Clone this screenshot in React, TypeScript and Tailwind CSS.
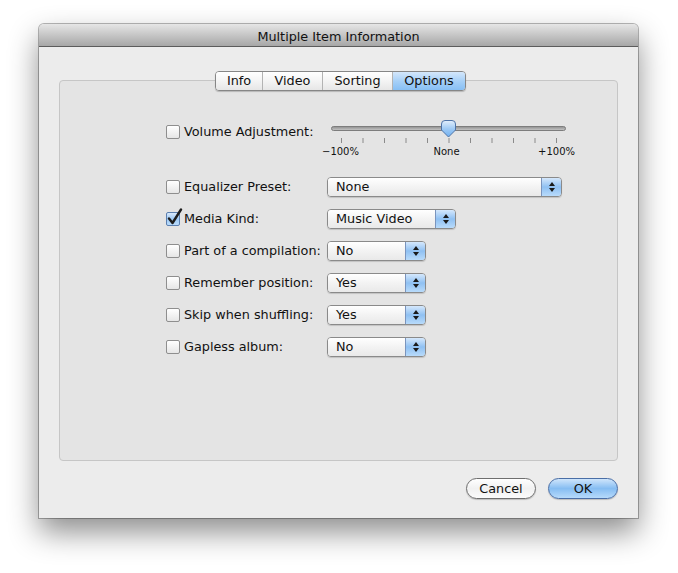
import React from "react";

const TABS = [
  { label: "Info", w: "w-[46px]" },
  { label: "Video", w: "w-[60px]" },
  { label: "Sorting", w: "w-[70px]" },
  { label: "Options", w: "w-[73px]" },
];

function Checkbox({ checked = false }: { checked?: boolean }) {
  return (
    <div className="relative w-[14px] h-[14px] shrink-0">
      <div
        className={
          checked
            ? "w-[14px] h-[14px] rounded-[2px] border border-[#5b7fb0] bg-gradient-to-b from-[#d9eafc] via-[#9ec9f4] to-[#b9dbfb]"
            : "w-[14px] h-[14px] rounded-[2px] border border-[#8e8e8e] bg-gradient-to-b from-[#ffffff] to-[#e6e6e6]"
        }
      />
      {checked && (
        <svg className="absolute -top-[4px] left-[1px]" width="16" height="18" viewBox="0 0 16 18">
          <path d="M2 10.5 L5.5 15 L14 1.5" fill="none" stroke="#1d1d1d" strokeWidth="2.4" strokeLinecap="round" strokeLinejoin="round" />
        </svg>
      )}
    </div>
  );
}

function Popup({ value, width }: { value: string; width: string }) {
  return (
    <div className={`${width} h-[20px] flex rounded-[4px] border border-[#8a8a8a] overflow-hidden shadow-[0_1px_1px_rgba(0,0,0,0.15)]`}>
      <div className="flex-1 flex items-center pl-[8px] text-[12.8px] bg-gradient-to-b from-[#ffffff] via-[#f3f3f3] to-[#e9e9e9]">
        {value}
      </div>
      <div className="w-[20px] flex items-center justify-center border-l border-[#7a94bd] bg-gradient-to-b from-[#d5e8fc] via-[#8fc0f2] to-[#b8dbfb]">
        <svg width="8" height="12" viewBox="0 0 8 12">
          <path d="M4 1 L7 5 L1 5 Z" fill="#1a1a1a" />
          <path d="M4 11 L7 7 L1 7 Z" fill="#1a1a1a" />
        </svg>
      </div>
    </div>
  );
}

function VolumeSlider() {
  const ticks = Array.from({ length: 11 }, (_, i) => 19.5 + i * 21.5);
  return (
    <div className="w-[253px] -ml-[5px]">
      <svg width="253" height="25" viewBox="0 0 253 25">
        <defs>
          <linearGradient id="trk" x1="0" y1="0" x2="0" y2="1">
            <stop offset="0" stopColor="#8d8d8d" />
            <stop offset="1" stopColor="#c9c9c9" />
          </linearGradient>
          <linearGradient id="thumb" x1="0" y1="0" x2="0" y2="1">
            <stop offset="0" stopColor="#e3effc" />
            <stop offset="0.5" stopColor="#9fcaf5" />
            <stop offset="1" stopColor="#6fb0f0" />
          </linearGradient>
        </defs>
        <rect x="9.5" y="6.5" width="234" height="4" rx="2" fill="url(#trk)" stroke="#7d7d7d" />
        {ticks.map((x) => (
          <line key={x} x1={x} y1="18" x2={x} y2="23" stroke="#8a8a8a" strokeWidth="1" />
        ))}
        <path
          d="M119.5 4 Q119.5 0.5 123 0.5 L130 0.5 Q133.5 0.5 133.5 4 L133.5 10 L126.5 17 L119.5 10 Z"
          fill="url(#thumb)"
          stroke="#4f74a8"
        />
      </svg>
      <div className="flex justify-between text-[10px] leading-[12px] mt-[1px]">
        <span>−100%</span>
        <span className="-ml-[4px]">None</span>
        <span>+100%</span>
      </div>
    </div>
  );
}

const ROWS: { label: string; value: string; width: string; checked?: boolean }[] = [
  { label: "Equalizer Preset:", value: "None", width: "w-[235px]" },
  { label: "Media Kind:", value: "Music Video", width: "w-[129px]", checked: true },
  { label: "Part of a compilation:", value: "No", width: "w-[99px]" },
  { label: "Remember position:", value: "Yes", width: "w-[99px]" },
  { label: "Skip when shuffling:", value: "Yes", width: "w-[99px]" },
  { label: "Gapless album:", value: "No", width: "w-[99px]" },
];

export default function App() {
  return (
    <div className="w-[678px] h-[573px] bg-white pt-[24px] pl-[39px] font-['DejaVu_Sans',sans-serif] text-[#111]">
      <div className="w-[599px] h-[494px] flex flex-col bg-[#ececec] rounded-t-[5px] shadow-[0_0_0_1px_rgba(0,0,0,0.28),0_14px_30px_rgba(0,0,0,0.45)]">
        {/* Title bar */}
        <div className="h-[23px] shrink-0 flex items-center justify-center pt-[3px] rounded-t-[5px] border-b border-[#5c5c5c] bg-gradient-to-b from-[#e6e6e6] via-[#c6c6c6] to-[#a7a7a7] text-[12.8px]">
          Multiple Item Information
        </div>

        <div className="flex-1 flex flex-col px-[20px] pt-[24px]">
          {/* Tabs */}
          <div className="relative z-10 flex justify-center h-[20px]">
            <div className="flex rounded-[4px] border border-[#868686] overflow-hidden shadow-[0_1px_1px_rgba(0,0,0,0.2)] ml-[4px]">
              {TABS.map((t, i) => (
                <div
                  key={t.label}
                  className={`${t.w} flex items-center justify-center text-[12.8px] ${i > 0 ? "border-l border-[#b3b3b3]" : ""} ${
                    t.label === "Options"
                      ? "bg-gradient-to-b from-[#d4e7fb] via-[#a7d0f7] to-[#87bff4]"
                      : "bg-gradient-to-b from-[#ffffff] via-[#f4f4f4] to-[#e6e6e6]"
                  }`}
                >
                  {t.label}
                </div>
              ))}
            </div>
          </div>

          {/* Group box */}
          <div className="h-[381px] -mt-[11px] rounded-[4px] border border-[#c6c6c6] bg-[#e4e4e4] pt-[39px] pl-[106px]">
            <div className="flex">
              <div className="w-[161px] h-[23px] flex items-center gap-[4px]">
                <Checkbox />
                <span className="text-[12.8px]">Volume Adjustment:</span>
              </div>
              <VolumeSlider />
            </div>

            <div className="flex flex-col gap-[12px] mt-[19px]">
              {ROWS.map((r) => (
                <div key={r.label} className="flex items-center h-[20px]">
                  <div className="w-[161px] flex items-center gap-[4px]">
                    <Checkbox checked={r.checked} />
                    <span className="text-[12.8px]">{r.label}</span>
                  </div>
                  <Popup value={r.value} width={r.width} />
                </div>
              ))}
            </div>
          </div>

          {/* Buttons */}
          <div className="flex justify-end gap-[12px] mt-[17px]">
            <button className="w-[70px] h-[21px] rounded-full border border-[#6e6e6e] bg-gradient-to-b from-[#ffffff] via-[#f1f1f1] to-[#fbfbfb] text-[12.8px] shadow-[0_1px_1px_rgba(0,0,0,0.2)]">
              Cancel
            </button>
            <button className="w-[70px] h-[21px] rounded-full border border-[#4a6ea6] bg-gradient-to-b from-[#cfe5fb] via-[#86bdf2] to-[#b6dafb] text-[12.8px] shadow-[0_1px_1px_rgba(0,0,0,0.2)]">
              OK
            </button>
          </div>
        </div>
      </div>
    </div>
  );
}
